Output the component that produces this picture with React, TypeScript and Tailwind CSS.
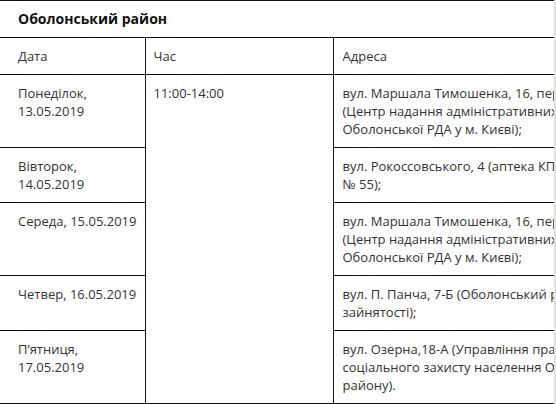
const rows = [
  {
    date: ["Понеділок,", "13.05.2019"],
    address: [
      "вул. Маршала Тимошенка, 16, перший поверх",
      "(Центр надання адміністративних послуг",
      "Оболонської РДА у м. Києві);",
    ],
  },
  {
    date: ["Вівторок,", "14.05.2019"],
    address: ["вул. Рокоссовського, 4 (аптека КП «Фармація»", "№ 55);"],
  },
  {
    date: ["Середа, 15.05.2019"],
    address: [
      "вул. Маршала Тимошенка, 16, перший поверх",
      "(Центр надання адміністративних послуг",
      "Оболонської РДА у м. Києві);",
    ],
  },
  {
    date: ["Четвер, 16.05.2019"],
    address: ["вул. П. Панча, 7-Б (Оболонський районний центр", "зайнятості);"],
  },
  {
    date: ["П’ятниця,", "17.05.2019"],
    address: [
      "вул. Озерна,18-А (Управління праці та",
      "соціального захисту населення Оболонського",
      "району).",
    ],
  },
]

function Lines({ lines }: { lines: string[] }) {
  return (
    <>
      {lines.map((l, i) => (
        <div key={i} className="whitespace-nowrap">
          {l}
        </div>
      ))}
    </>
  )
}

export default function App() {
  return (
    <div className="w-[556px] h-[404px] bg-white flex" style={{ fontFamily: '"Open Sans", sans-serif' }}>
      <div className="w-[554px] h-[404px] overflow-hidden">
        <table className="table-fixed border-collapse w-[760px] text-[13px] leading-[18px] text-[#333]">
          <colgroup>
            <col className="w-[145px]" />
            <col className="w-[188px]" />
            <col />
          </colgroup>
          <tbody>
            <tr className="border-t border-b border-[#111]">
              <td colSpan={3} className="pl-[18px] pt-[9px] pb-[9px] text-[14px] font-bold text-[#111]">
                Оболонський район
              </td>
            </tr>
            <tr className="border-b border-[#111]">
              <td className="pl-[18px] py-[9px] align-top">Дата</td>
              <td className="pl-[8px] py-[9px] align-top border-l border-[#111]">Час</td>
              <td className="pl-[9px] py-[9px] align-top border-l border-[#111]">Адреса</td>
            </tr>
            {rows.map((r, i) => (
              <tr key={i} className="border-b border-[#111]">
                <td className="pl-[18px] py-[9px] align-top">
                  <Lines lines={r.date} />
                </td>
                {i === 0 && (
                  <td rowSpan={5} className="pl-[8px] py-[9px] align-top border-l border-[#111]">
                    11:00-14:00
                  </td>
                )}
                <td className="pl-[9px] py-[9px] align-top border-l border-[#111]">
                  <Lines lines={r.address} />
                </td>
              </tr>
            ))}
          </tbody>
        </table>
      </div>
      <div className="w-[2px] h-[404px] bg-[#e2e2e2]" />
    </div>
  )
}
